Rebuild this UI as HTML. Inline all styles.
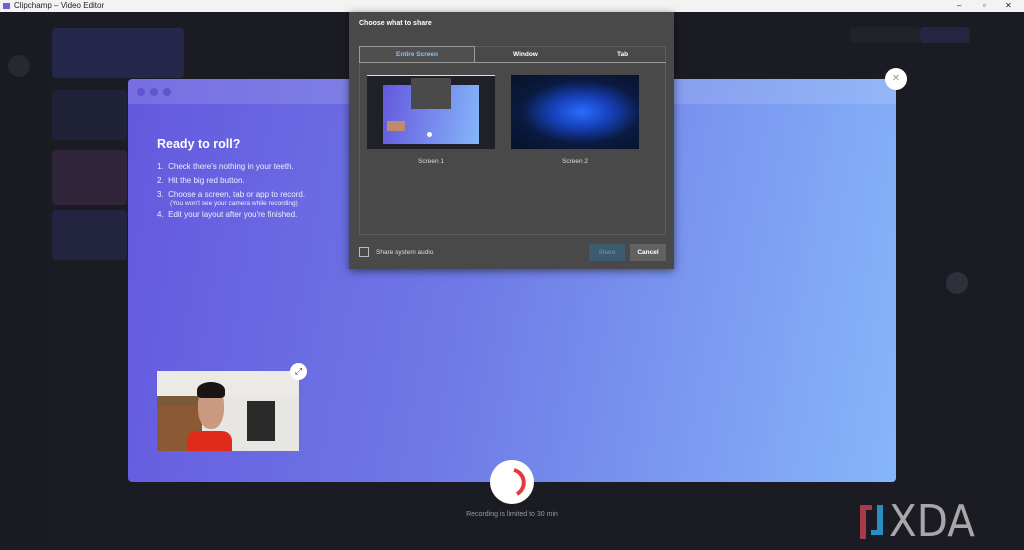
<!DOCTYPE html><html><head><style>
*{margin:0;padding:0;box-sizing:border-box}
body{width:1024px;height:550px;overflow:hidden;background:#1b1b24;font-family:"Liberation Sans",sans-serif;position:relative}
.a{position:absolute}
</style></head><body>
<div class="a" style="left:0;top:0;width:1024px;height:12px;background:#f3f3f3;font-size:8px;color:#222;line-height:12px;padding-left:14px">Clipchamp – Video Editor
<span class="a" style="left:3px;top:3px;width:7px;height:6px;background:#7b5cd6"></span>
<span class="a" style="left:957px;top:0;font-size:8px">–</span><span class="a" style="left:983px;top:0">▫</span><span class="a" style="left:1005px;top:0">✕</span></div>
<div class="a" style="left:0;top:12px;width:45px;height:538px;background:#1a1a23"></div>
<div class="a" style="left:8px;top:55px;width:22px;height:22px;border-radius:50%;background:#282832"></div>
<div class="a" style="left:52px;top:28px;width:132px;height:50px;background:#25284a;border-radius:4px"></div>
<div class="a" style="left:52px;top:150px;width:75px;height:55px;background:#30243a;border-radius:4px"></div>
<div class="a" style="left:52px;top:210px;width:75px;height:50px;background:#222440;border-radius:4px"></div>
<div class="a" style="left:52px;top:90px;width:75px;height:50px;background:#20223a;border-radius:4px"></div>
<div class="a" style="left:850px;top:27px;width:70px;height:16px;background:#22222a;border-radius:4px"></div>
<div class="a" style="left:920px;top:27px;width:50px;height:16px;background:#242640;border-radius:4px"></div>
<div class="a" style="left:946px;top:272px;width:22px;height:22px;border-radius:50%;background:#30303a"></div>
<div class="a" style="left:128px;top:79px;width:768px;height:403px;border-radius:4px;background:linear-gradient(100deg,#6458de 0%,#6f7ae6 45%,#86b6fa 100%);overflow:hidden">
<div style="height:25px;background:rgba(255,255,255,.13)"></div>
<div class="a" style="left:9px;top:9px;width:8px;height:8px;border-radius:50%;background:#5f55cf"></div>
<div class="a" style="left:22px;top:9px;width:8px;height:8px;border-radius:50%;background:#5f55cf"></div>
<div class="a" style="left:35px;top:9px;width:8px;height:8px;border-radius:50%;background:#5f55cf"></div>
<div class="a" style="left:29px;top:58px;color:#fff;font-weight:bold;font-size:12.5px">Ready to roll?</div>
<div class="a" style="left:29px;top:81px;color:#eef;font-size:8px;line-height:14px">
<div>1.&nbsp; Check there's nothing in your teeth.</div>
<div>2.&nbsp; Hit the big red button.</div>
<div>3.&nbsp; Choose a screen, tab or app to record.</div>
<div style="font-size:6.5px;line-height:8px;margin-left:13px;margin-top:-2px">(You won't see your camera while recording)</div>
<div>4.&nbsp; Edit your layout after you're finished.</div></div>
</div>
<div class="a" style="left:885px;top:68px;width:22px;height:22px;border-radius:50%;background:#fff;color:#999;font-size:10px;text-align:center;line-height:22px">✕</div>
<div class="a" style="left:157px;top:371px;width:142px;height:80px;background:linear-gradient(90deg,#7a5a3a 0 30%,#e8e6e2 30% 100%);overflow:hidden">
<div class="a" style="left:0;top:0;width:142px;height:25px;background:#eceae6"></div>
<div class="a" style="left:0;top:35px;width:45px;height:45px;background:#8b5a35"></div>
<div class="a" style="left:90px;top:30px;width:28px;height:40px;background:#2a2a2a"></div>
<div class="a" style="left:30px;top:60px;width:45px;height:25px;background:#e02a1a;border-radius:10px 10px 0 0"></div>
<div class="a" style="left:41px;top:14px;width:26px;height:44px;background:#c99a80;border-radius:45%"></div>
<div class="a" style="left:40px;top:11px;width:28px;height:16px;background:#1a1412;border-radius:50% 50% 20% 20%"></div>
</div>
<div class="a" style="left:290px;top:363px;width:17px;height:17px;border-radius:50%;background:#fff;color:#444;font-size:9px;text-align:center;line-height:17px">⤢</div>
<div class="a" style="left:490px;top:460px;width:44px;height:44px;border-radius:50%;background:#fff"></div>
<svg class="a" style="left:490px;top:460px" width="44" height="44"><path d="M24 10 A13 13 0 0 1 27 34" stroke="#e63a3a" stroke-width="4" fill="none"/></svg>
<div class="a" style="left:0;width:1024px;top:511px;text-align:center;color:#9a9aa6;font-size:7px">Recording is limited to 30 min</div>
<div class="a" style="left:860px;top:505px;width:6px;height:34px;background:#a83a4a"></div>
<div class="a" style="left:860px;top:505px;width:12px;height:5px;background:#a83a4a"></div>
<div class="a" style="left:877px;top:505px;width:6px;height:30px;background:#2a8fc0"></div>
<div class="a" style="left:871px;top:530px;width:12px;height:5px;background:#2a8fc0"></div>
<div class="a" style="left:889px;top:496px;color:#a8a8a8;font-size:44px;font-family:'DejaVu Sans',sans-serif;transform:scaleX(.92);transform-origin:left">XDA</div>
<div class="a" style="left:349px;top:12px;width:325px;height:257px;background:#494949;box-shadow:0 2px 8px rgba(0,0,0,.5)">
<div class="a" style="left:10px;top:8px;color:#fff;font-size:7px;font-weight:bold">Choose what to share</div>
<div class="a" style="left:10px;top:34px;width:307px;height:189px;border:1px solid #5e5e5e"></div>
<div class="a" style="left:10px;top:34px;width:116px;height:17px;border:1px solid #9a9a9a;background:#4f4f4f;color:#8ec0ee;font-size:6.5px;text-align:center;line-height:15px;font-weight:bold">Entire Screen</div>
<div class="a" style="left:126px;top:50px;width:191px;height:1px;background:#9a9a9a"></div>
<div class="a" style="left:164px;top:39px;color:#fff;font-size:6.5px;font-weight:bold">Window</div>
<div class="a" style="left:268px;top:39px;color:#fff;font-size:6.5px;font-weight:bold">Tab</div>
<div class="a" style="left:18px;top:63px;width:128px;height:74px;background:#202028;border-top:1px solid #ddd">
<div class="a" style="left:16px;top:9px;width:96px;height:59px;background:linear-gradient(100deg,#6458de,#86b6fa)"></div>
<div class="a" style="left:44px;top:2px;width:40px;height:31px;background:#4a4a4a"></div>
<div class="a" style="left:60px;top:56px;width:5px;height:5px;border-radius:50%;background:#fff"></div>
<div class="a" style="left:20px;top:45px;width:18px;height:10px;background:#c08a70"></div></div>
<div class="a" style="left:162px;top:63px;width:128px;height:74px;background:radial-gradient(ellipse at 55% 50%,#2a6cff 0%,#1640b8 30%,#0a1a40 60%,#081228 100%)"></div>
<div class="a" style="left:69px;top:146px;color:#ddd;font-size:6.5px">Screen 1</div>
<div class="a" style="left:213px;top:146px;color:#ddd;font-size:6.5px">Screen 2</div>
<div class="a" style="left:10px;top:235px;width:10px;height:10px;border:1px solid #bbb"></div>
<div class="a" style="left:27px;top:237px;color:#ddd;font-size:6.5px">Share system audio</div>
<div class="a" style="left:240px;top:232px;width:36px;height:17px;background:#3c5a70;color:#7a95a8;font-size:6.5px;text-align:center;line-height:17px">Share</div>
<div class="a" style="left:281px;top:232px;width:36px;height:17px;background:#626262;color:#fff;font-size:6.5px;text-align:center;line-height:17px;font-weight:bold">Cancel</div>
</div>
</body></html>
